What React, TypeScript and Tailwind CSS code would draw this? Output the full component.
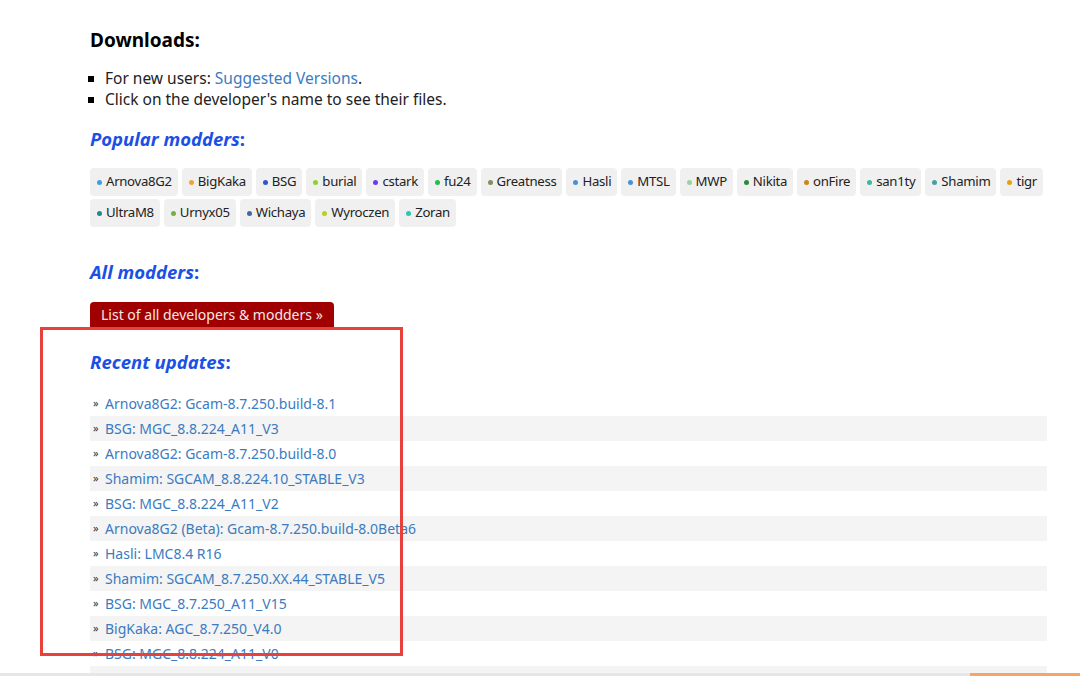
import React from "react";

const tags: [string, string][] = [
  ["Arnova8G2", "#3aa0e8"],
  ["BigKaka", "#e8a838"],
  ["BSG", "#2f55d4"],
  ["burial", "#8cd42a"],
  ["cstark", "#6a3cf0"],
  ["fu24", "#22c04a"],
  ["Greatness", "#8a8a60"],
  ["Hasli", "#4a90d0"],
  ["MTSL", "#4a90d0"],
  ["MWP", "#9ad0a8"],
  ["Nikita", "#2e8a3a"],
  ["onFire", "#c8861e"],
  ["san1ty", "#3cb8a0"],
  ["Shamim", "#4aa0a0"],
  ["tigr", "#e8a010"],
  ["UltraM8", "#1e8a8a"],
  ["Urnyx05", "#78b040"],
  ["Wichaya", "#3a6aa8"],
  ["Wyroczen", "#b8d020"],
  ["Zoran", "#2ac8b0"],
];

const updates = [
  "Arnova8G2: Gcam-8.7.250.build-8.1",
  "BSG: MGC_8.8.224_A11_V3",
  "Arnova8G2: Gcam-8.7.250.build-8.0",
  "Shamim: SGCAM_8.8.224.10_STABLE_V3",
  "BSG: MGC_8.8.224_A11_V2",
  "Arnova8G2 (Beta): Gcam-8.7.250.build-8.0Beta6",
  "Hasli: LMC8.4 R16",
  "Shamim: SGCAM_8.7.250.XX.44_STABLE_V5",
  "BSG: MGC_8.7.250_A11_V15",
  "BigKaka: AGC_8.7.250_V4.0",
  "BSG: MGC_8.8.224_A11_V0",
  "Arnova8G2 (Beta): Gcam-8.7.250.build-8.0Beta4",
];

function SectionTitle({ children, className }: { children: React.ReactNode; className: string }) {
  return (
    <h3 className={"text-[18.5px] leading-[24px] font-bold italic text-[#1b50e6] " + className}>
      {children}
      <span className="not-italic">:</span>
    </h3>
  );
}

export default function App() {
  return (
    <div className="relative w-[1080px] h-[676px] overflow-hidden bg-white font-['Noto_Sans',sans-serif] text-[#222]">
      <div className="pl-[90px] pr-[33px] pt-[28px]">
        <h2 className="text-[19px] leading-[24px] font-bold text-black">Downloads:</h2>
        <ul className="mt-[16px] text-[15.5px] leading-[21px] text-[#222]">
          <li className="flex items-center">
            <span className="w-[6px] h-[6px] bg-black ml-[-2px] mr-[11px]" />
            <span>
              For new users: <span className="text-[#3b7bbf]">Suggested Versions</span>.
            </span>
          </li>
          <li className="flex items-center">
            <span className="w-[6px] h-[6px] bg-black ml-[-2px] mr-[11px]" />
            <span>Click on the developer's name to see their files.</span>
          </li>
        </ul>

        <SectionTitle className="mt-[17px]">Popular modders</SectionTitle>
        <div className="mt-[17px] flex flex-wrap gap-x-[4px] gap-y-[3px] w-[960px]">
          {tags.map(([name, color]) => (
            <div
              key={name}
              className="h-[28px] flex items-center pl-[7px] pr-[6px] rounded-[4px] bg-[#f0f0f0] text-[13.2px] tracking-[-0.3px] text-[#222]"
            >
              <span className="w-[5px] h-[5px] rounded-full mr-[4px]" style={{ backgroundColor: color }} />
              {name}
            </div>
          ))}
        </div>

        <SectionTitle className="mt-[33px]">All modders</SectionTitle>
        <div className="mt-[18px] inline-flex h-[27px] items-center px-[11px] rounded-t-[4px] rounded-b-[2px] bg-[#a00000] border-b-2 border-[#800000] text-[14px] text-[#f4e8e8]">
          List of all developers &amp; modders »
        </div>

        <SectionTitle className="mt-[21px]">Recent updates</SectionTitle>
        <div className="mt-[17px]">
          {updates.map((u, i) => (
            <div
              key={u}
              className={
                "h-[25px] flex items-center text-[14px] " + (i % 2 === 1 ? "bg-[#f4f4f4]" : "bg-white")
              }
            >
              <span className="w-[15px] pl-[3px] text-[11px] text-[#333]">»</span>
              <span className="text-[#3b7bbf]">{u}</span>
            </div>
          ))}
        </div>
      </div>

      <div className="absolute left-[40px] top-[327px] w-[363px] h-[329px] border-[3px] border-[#e8413c] pointer-events-none" />

      <div className="absolute left-0 bottom-0 w-full h-[3px] bg-[#e4e6ea] flex">
        <div className="flex-1" />
        <div className="w-[110px] bg-[#f4a66a]" />
      </div>
    </div>
  );
}
